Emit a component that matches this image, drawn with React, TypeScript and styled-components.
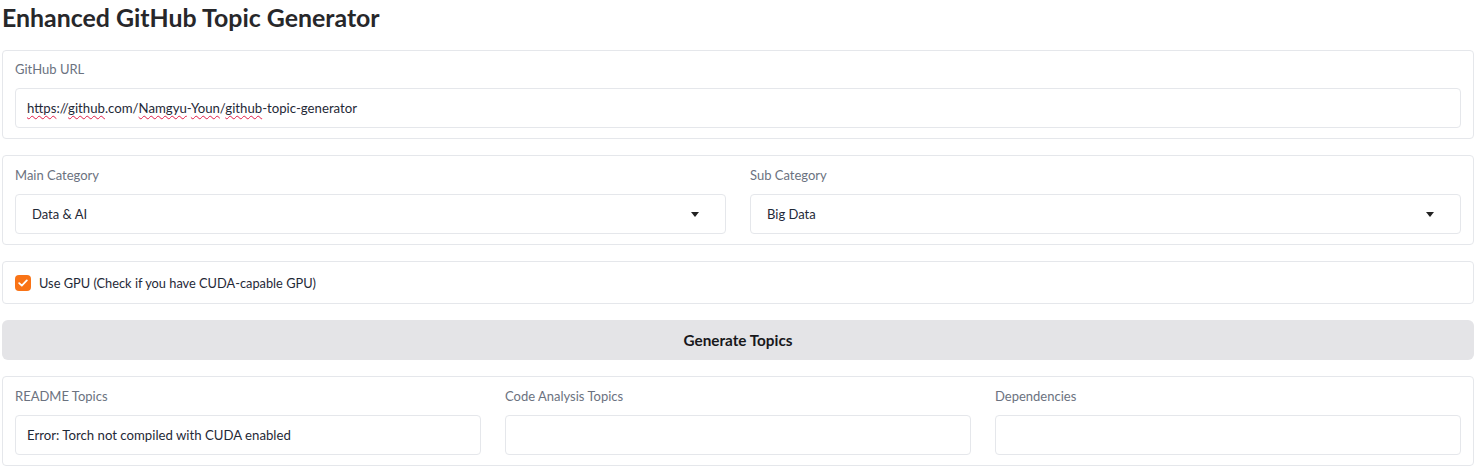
import React from "react";
import styled, { createGlobalStyle } from "styled-components";

const Global = createGlobalStyle`
  html, body { margin: 0; padding: 0; background: #ffffff; }
  body { font-family: Lato, "Noto Sans", sans-serif; color: #1f2937; }
  * { box-sizing: border-box; }
`;

const Page = styled.div`
  display: flex;
  flex-direction: column;
  gap: 16px;
  padding: 0 4px 0 2px;
`;

const Title = styled.h1`
  margin: 0;
  padding-top: 2px;
  height: 34px;
  font-size: 24.9px;
  font-weight: 700;
  line-height: 30px;
  color: #27272a;
`;

const Panel = styled.div<{ $cols?: number; $top?: number; $bottom?: number }>`
  border: 1px solid #e5e7eb;
  border-radius: 4px;
  padding: ${(p) => p.$top ?? 12}px 12px ${(p) => p.$bottom ?? 10}px;
  display: grid;
  grid-template-columns: repeat(${(p) => p.$cols ?? 1}, 1fr);
  column-gap: 24px;
  background: #fff;
`;

const Field = styled.div`
  display: flex;
  flex-direction: column;
  gap: 11px;
`;

const Label = styled.span`
  font-size: 13px;
  line-height: 15px;
  color: #6b7280;
`;

const Box = styled.div`
  height: 40px;
  border: 1px solid #e5e7eb;
  border-radius: 4px;
  display: flex;
  align-items: center;
  justify-content: space-between;
  padding: 0 11px;
  font-size: 13.2px;
  color: #1f2937;
`;

const SelectBox = styled(Box)`
  padding: 0 26px 0 16px;
  font-size: 13px;
`;

const Squiggle = styled.span`
  text-decoration: underline wavy #e11d48;
  text-decoration-thickness: 1px;
  text-underline-offset: 2px;
`;

const Caret = styled.span`
  width: 0;
  height: 0;
  border-left: 4.5px solid transparent;
  border-right: 4.5px solid transparent;
  border-top: 5px solid #222;
`;

const CheckRow = styled.label`
  display: flex;
  align-items: center;
  gap: 8px;
  font-size: 12.8px;
  color: #1f2937;
  height: 17px;
`;

const CheckBox = styled.span`
  width: 16px;
  height: 16px;
  border-radius: 4px;
  background: #f97316;
  display: flex;
  align-items: center;
  justify-content: center;
`;

const Button = styled.button`
  height: 40px;
  border: none;
  border-radius: 6px;
  background: #e4e4e7;
  font-family: inherit;
  font-size: 15.3px;
  font-weight: 700;
  color: #18181b;
`;

export default function App() {
  return (
    <>
      <Global />
      <Page>
        <Title>Enhanced GitHub Topic Generator</Title>
        <Panel $top={11}>
          <Field>
            <Label>GitHub URL</Label>
            <Box>
              <span>
                <Squiggle>https</Squiggle>://<Squiggle>github</Squiggle>.com/<Squiggle>Namgyu</Squiggle>-<Squiggle>Youn</Squiggle>/<Squiggle>github</Squiggle>-topic-generator
              </span>
            </Box>
          </Field>
        </Panel>
        <Panel $cols={2}>
          <Field>
            <Label>Main Category</Label>
            <SelectBox>
              <span>Data &amp; AI</span>
              <Caret />
            </SelectBox>
          </Field>
          <Field>
            <Label>Sub Category</Label>
            <SelectBox>
              <span>Big Data</span>
              <Caret />
            </SelectBox>
          </Field>
        </Panel>
        <Panel $bottom={12}>
          <CheckRow>
            <CheckBox>
              <svg width="10" height="8" viewBox="0 0 10 8">
                <path d="M1.2 4.2 L3.8 6.6 L8.8 1.4" fill="none" stroke="#fff" strokeWidth="1.8" strokeLinecap="round" strokeLinejoin="round" />
              </svg>
            </CheckBox>
            Use GPU (Check if you have CUDA-capable GPU)
          </CheckRow>
        </Panel>
        <Button>Generate Topics</Button>
        <Panel $cols={3}>
          <Field>
            <Label>README Topics</Label>
            <Box>Error: Torch not compiled with CUDA enabled</Box>
          </Field>
          <Field>
            <Label>Code Analysis Topics</Label>
            <Box />
          </Field>
          <Field>
            <Label>Dependencies</Label>
            <Box />
          </Field>
        </Panel>
      </Page>
    </>
  );
}
